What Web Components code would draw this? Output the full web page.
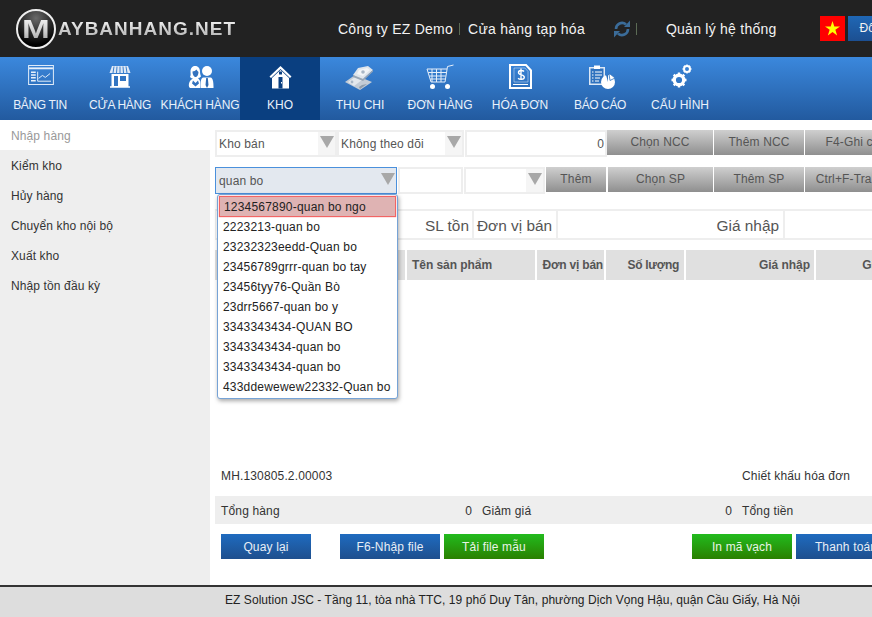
<!DOCTYPE html>
<html lang="vi"><head><meta charset="utf-8"><title>Kho</title>
<style>
html,body{margin:0;padding:0;width:872px;height:617px;overflow:hidden;background:#fff;font-family:"Liberation Sans",Arial,sans-serif;font-size:12px}
</style></head><body>
<app-page>
  <top-bar slot="top"></top-bar>
  <main-nav slot="nav">
    <nav-item label="BẢNG TIN" style="letter-spacing:-.35px"><svg style="margin:-3px 0 0 2px" width="26" height="20" viewBox="0 0 27 21" fill="none" stroke="#e8f1fb" stroke-width="1"><rect x=".5" y=".5" width="26" height="20"/><path d="M1 3.500h25" stroke-width="2"/><path d="M3 7.500h5M3 10.500h5M3 13.500h5M3 16.500h5" stroke-width="1.600"/><path d="M10 7v10M10 17h14M11 14l4-3 3 2 5-4"/></svg></nav-item>
    <nav-item label="CỬA HÀNG" style="letter-spacing:-.3px"><svg width="22" height="23" viewBox="0 0 22 23" fill="none"><path d="M3 1h16l2.500 7h-21z" fill="#dfe9f6"/><path d="M5 1.500 4 8M8 1.500 7.500 8M11 1.500V8M14 1.500l.5 6.500M17 1.500 18 8" stroke="#3a7fcb"/><path d="M2.500 9h17v13h-17z" fill="#fff"/><path d="M5 11h4v10H5zM11 11h6v5h-6z" fill="#3375c2"/><path d="M1 22h20" stroke="#fff" stroke-width="1.500"/></svg></nav-item>
    <nav-item label="KHÁCH HÀNG" style="letter-spacing:-.1px"><svg style="margin-left:1px" width="26" height="24" viewBox="0 0 26 24"><path d="M7 1c3.500 0 5 2.500 5 5.500 0 2 .5 3.500 1 5-1 1-2 1.500-3 1.500l1.500 2c1 1 1 4 .5 8H2c-1.500-1-1.500-4-.5-6 .5-1.500 2-2.500 3.500-3.500-1 0-2-.5-3-1.500C3 10 2.500 8.500 2.500 6.500 2.500 3.500 4 1 7 1z" fill="#fff"/><path d="M4.500 6.500c1.500 0 3-1 4-2 .5 1 1.500 2 2 2.500 0 3-1.500 5-3 5s-3-2.500-3-5.500zM5 15.500l2.500 2.500 2.500-2.500 1 3-3.500 3-3.500-3z" fill="#3473bf"/><circle cx="19" cy="6" r="5" fill="#fff"/><path d="M12.500 23c0-6 0-10 3-10.500h7c2.500.5 3 4.500 3 10.500z" fill="#fff"/><path d="M18.200 13h1.600l.7 7-1.500 3-1.500-3z" fill="#2d69b1"/></svg></nav-item>
    <nav-item label="KHO" active><svg width="23" height="24" viewBox="0 0 23 24"><path d="M11.500 1 22.500 11.500 21 13 11.500 4 2 13 .5 11.500z" fill="#fff"/><path d="M11.500 5 20 13v10.500H3V13z" fill="#fff"/><path d="M9.500 12h4v11.500h-4z" fill="#0a3f80"/><rect x="12" y="17" width="1" height="1.500" fill="#fff"/><path d="M10 6.500h3v3h-3z" fill="#0a3f80"/></svg></nav-item>
    <nav-item label="THU CHI"><svg style="margin:1px 2px 0 0" width="29" height="26" viewBox="0 0 29 26"><path d="M0 18 10 11 27 18 15 26z" fill="#c3ccd6"/><path d="M3 18 10 13l7 3-8 6z" fill="#e3e8ed"/><path d="M14 23l3-2 5-1-7 5z" fill="#8e9cab"/><path d="M13 4 23 2 28 6 18 15 8 11z" fill="#dfe5eb"/><path d="M14 6l8-2 3 2-7 6-6-2z" fill="#f2f5f7"/><path d="M8 11l10 4 10-9v1.500L18 17 8 13z" fill="#98a6b5"/><circle cx="18" cy="8" r="1.800" fill="#a9b7c6"/><circle cx="7" cy="18" r="1.400" fill="#a9b7c6"/></svg></nav-item>
    <nav-item label="ĐƠN HÀNG" style="letter-spacing:-.1px"><svg width="28" height="26" viewBox="0 0 28 26" fill="none" stroke="#e4eefa"><path d="M27.500 1 21.500 2.500 19 18H5L1 5h20"/><path d="M2.200 8.500h18M3.200 12h16.500M4.300 15h15M6 5v13M10.500 5v13M15 5v13"/><circle cx="6.500" cy="22.500" r="2.500" fill="#fff" stroke="none"/><circle cx="21.500" cy="22.500" r="2.500" fill="#fff" stroke="none"/></svg></nav-item>
    <nav-item label="HÓA ĐƠN"><svg style="margin-left:1px" width="23" height="25" viewBox="0 0 23 25" fill="none" stroke="#fff"><path d="M1 1h16l5 5.500V24H1z" stroke-width="2"/><path d="M5 4h11l3 3.500V18H5z" stroke-width=".7" opacity=".6"/><path d="M15 7.500c-1-1.300-5.500-1.800-5.500 1 0 3 5.800 1.800 5.800 4.800 0 2.700-5 2.300-6.200.9M12 4.500v11.500" stroke-width="1.400"/><path d="M4 20.500h15" stroke-width="1"/></svg></nav-item>
    <nav-item label="BÁO CÁO" style="letter-spacing:-.4px"><svg style="margin-left:3px" width="28" height="26" viewBox="0 0 28 26"><path d="M1 3h16v18H1z" fill="#dce8f6"/><path d="M2.500 4.500h13v15h-13z" fill="#2f72bf"/><path d="M6 1.500h6V5H6z" fill="#fff"/><path d="M4 8h1.500M7 8h7M4 11h1.500M7 11h7M4 14h1.500M7 14h5M4 17h1.500M7 17h4" stroke="#fff"/><circle cx="20" cy="18" r="7" fill="#fff"/><path d="M20 18V11l-2 0z" fill="#2f72bf"/><path d="M21 10h1l5 4-5 2.500z" fill="#fff" stroke="#2f72bf" stroke-width=".8"/></svg></nav-item>
    <nav-item label="CẤU HÌNH"><svg style="margin-left:2px" width="21" height="25" viewBox="0 0 21 25" fill="none" stroke="#fff"><circle cx="8" cy="16" r="4.800" stroke-width="3.400"/><path d="M8 8.500v2.500M8 21v2.500M.5 16H3M13 16h2.500M2.700 10.700l1.800 1.800M11.500 19.500l1.800 1.800M2.700 21.300l1.800-1.800M11.500 12.500l1.800-1.800" stroke-width="2.400"/><circle cx="16" cy="5" r="3" stroke-width="2"/><path d="M16 .5v1M16 8.500v1M11.500 5h1M19.500 5h1M12.900 1.900l.7.7M18.400 7.400l.7.7M12.900 8.100l.7-.7M18.400 2.600l.7-.7" stroke-width="1.500"/></svg></nav-item>
  </main-nav>
  <side-menu slot="side">
    <side-item active>Nhập hàng</side-item>
    <side-item>Kiểm kho</side-item>
    <side-item>Hủy hàng</side-item>
    <side-item>Chuyển kho nội bộ</side-item>
    <side-item>Xuất kho</side-item>
    <side-item>Nhập tồn đầu kỳ</side-item>
  </side-menu>
  <import-form slot="main">
    <form-row slot="r1" h="27">
      <x-select style="width:122px">Kho bán</x-select>
      <x-select style="width:127px;margin-right:1px">Không theo dõi</x-select>
      <x-field style="width:142px;text-align:right">0</x-field>
      <x-btn style="width:106px;margin-right:1px">Chọn NCC</x-btn>
      <x-btn style="width:90px;margin-right:1px">Thêm NCC</x-btn>
      <x-btn style="width:102px">F4-Ghi chú</x-btn>
    </form-row>
    <form-row slot="r2" h="26">
      <x-combo style="width:182px;margin-right:1px" value="quan bo">
        <combo-opt selected>1234567890-quan bo ngo</combo-opt>
        <combo-opt>2223213-quan bo</combo-opt>
        <combo-opt>23232323eedd-Quan bo</combo-opt>
        <combo-opt>23456789grrr-quan bo tay</combo-opt>
        <combo-opt>23456tyy76-Quần Bò</combo-opt>
        <combo-opt>23drr5667-quan bo y</combo-opt>
        <combo-opt>3343343434-QUAN BO</combo-opt>
        <combo-opt>3343343434-quan bo</combo-opt>
        <combo-opt>3343343434-quan bo</combo-opt>
        <combo-opt>433ddewewew22332-Quan bo</combo-opt>
      </x-combo>
      <x-field style="width:65px;margin-right:1px"></x-field>
      <x-select style="width:81px;margin-right:1px"></x-select>
      <x-btn style="width:60px;margin-right:2px">Thêm</x-btn>
      <x-btn style="width:105px;margin-right:1px">Chọn SP</x-btn>
      <x-btn style="width:90px;margin-right:1px">Thêm SP</x-btn>
      <x-btn style="width:102px">Ctrl+F-Tra cứu</x-btn>
    </form-row>
    <entry-row slot="r3">
      <entry-cell style="width:258px">SL tồn</entry-cell>
      <entry-cell style="width:84px" left>Đơn vị bán</entry-cell>
      <entry-cell style="width:227px;padding-right:4px">Giá nhập</entry-cell>
      <entry-cell style="width:120px"></entry-cell>
    </entry-row>
    <head-row slot="r4">
      <head-cell style="width:192px"></head-cell>
      <head-cell style="width:130px" left>Tên sản phẩm</head-cell>
      <head-cell style="width:69px;padding-right:1px;letter-spacing:-.2px">Đơn vị bán</head-cell>
      <head-cell style="width:80px;padding-right:5px;letter-spacing:-.3px">Số lượng</head-cell>
      <head-cell style="width:130px;padding-right:4px">Giá nhập</head-cell>
      <head-cell style="width:95px">Giá bán</head-cell>
    </head-row>
    <order-line slot="r5"><span slot="a">MH.130805.2.00003</span><span slot="b">Chiết khấu hóa đơn</span></order-line>
    <total-band slot="r6">
      <total-item label="Tổng hàng" value="0" style="width:261px"></total-item>
      <total-item label="Giảm giá" value="0" style="width:260px"></total-item>
      <total-item label="Tổng tiền" style="width:130px"></total-item>
    </total-band>
    <action-row slot="r7">
      <x-btn kind="blue" style="width:90px;margin-right:29px">Quay lại</x-btn>
      <x-btn kind="blue" style="width:100px;margin-right:4px">F6-Nhập file</x-btn>
      <x-btn kind="green" style="width:100px;margin-right:148px">Tải file mẫu</x-btn>
      <x-btn kind="green" style="width:100px;margin-right:4px">In mã vạch</x-btn>
      <x-btn kind="blue" style="width:100px">Thanh toán</x-btn>
    </action-row>
  </import-form>
  <page-foot slot="foot">EZ Solution JSC - Tầng 11, tòa nhà TTC, 19 phố Duy Tân, phường Dịch Vọng Hậu, quận Cầu Giấy, Hà Nội</page-foot>
</app-page>
<script>
function def(name, html){
  customElements.define(name, class extends HTMLElement{
    constructor(){super();this.attachShadow({mode:'open'}).innerHTML=typeof html==='function'?html(this):html;}
    connectedCallback(){
      this.shadowRoot.querySelectorAll('[data-attr]').forEach(n=>{n.textContent=this.getAttribute(n.dataset.attr)||'';});
      const v=this.shadowRoot.querySelector('[data-value]');
      if(v)v.textContent=this.getAttribute('value')||'';
    }
  });
}
def('app-page',`<style>
:host{display:flex;flex-direction:column;width:872px;height:617px;overflow:hidden}
.mid{flex:1;display:flex;min-height:0}
</style><slot name="top"></slot><slot name="nav"></slot><div class="mid"><slot name="side"></slot><slot name="main"></slot></div><slot name="foot"></slot>`);
def('top-bar',`<style>
:host{display:flex;align-items:center;height:57px;background:#222;color:#f2f2f2;font-size:14px;letter-spacing:.25px;flex:none;white-space:nowrap}
.logo{display:flex;align-items:center;margin-left:16px;width:219px;flex:none;letter-spacing:0}
.ring{width:36px;height:36px;border:2px solid #eee;border-radius:50%;background:radial-gradient(circle at 50% 20%,#6a6a6a 0,#2a2a2a 45%,#000 78%);display:flex;align-items:center;justify-content:center;flex:none}
.m{font:bold 26px/30px "Liberation Sans",sans-serif;background:linear-gradient(#fff,#ccc 60%,#999);-webkit-background-clip:text;background-clip:text;color:transparent;transform:scaleX(1.28)}
.word{font:bold 19px/24px "Liberation Sans",sans-serif;letter-spacing:1px;margin-left:2px;background:linear-gradient(#fff,#ccc 55%,#aaa);-webkit-background-clip:text;background-clip:text;color:transparent}
.co{margin-left:103px}
.sep{width:1px;height:12px;background:#5c6b55;flex:none}
.flag{width:25px;height:25px;background:#f00;display:flex;align-items:center;justify-content:center;margin-left:43px;flex:none}
.sw{width:40px;height:25px;margin-left:3px;background:linear-gradient(#1f67b5,#1c4f91);padding-left:12px;line-height:25px;font-size:12px;letter-spacing:0;flex:none;overflow:hidden;box-sizing:border-box}
</style>
<div class="logo"><div class="ring"><span class="m">M</span></div><span class="word">AYBANHANG.NET</span></div>
<span class="co">Công ty EZ Demo</span><span class="sep" style="margin:0 8px 0 6px"></span><span>Cửa hàng tạp hóa</span>
<svg style="margin-left:28px;flex:none" width="18" height="20" viewBox="0 0 18 20" fill="none" stroke="#3b6c99" stroke-width="2.600"><path d="M3 10a6 6 0 0 1 10-4.500"/><path d="M15 10a6 6 0 0 1-10 4.500"/><path d="M11 8h6V1.500z" fill="#3b6c99" stroke="none"/><path d="M7 12H1v6.500z" fill="#3b6c99" stroke="none"/></svg>
<span class="sep" style="margin-left:5px"></span>
<span style="margin-left:29px">Quản lý hệ thống</span>
<div class="flag"><svg width="15" height="15" viewBox="0 0 20 20"><path d="M10 0l2.400 7.300H20l-6.200 4.500 2.400 7.400-6.200-4.600-6.200 4.600 2.400-7.400L0 7.300h7.600z" fill="#ff0"/></svg></div>
<div class="sw">Đổi mật khẩu</div>`);
def('main-nav',`<style>:host{display:flex;height:63px;flex:none;background:linear-gradient(#3b88dd,#225a9f)}</style><slot></slot>`);
def('nav-item',`<style>
:host{display:flex;flex-direction:column;align-items:center;width:80px;height:63px;flex:none;color:#e9f1fa;font-size:12px;white-space:nowrap}
:host([active]){background:#0a3f80}
.i{height:33px;margin-top:3px;display:flex;align-items:center;justify-content:center}
.l{line-height:14px;margin-top:5px}
</style><div class="i"><slot></slot></div><div class="l" data-attr="label"></div>`);
def('side-menu',`<style>:host{display:block;width:210px;flex:none;background:#eee}</style><slot></slot>`);
def('side-item',`<style>
:host{display:block;height:30px;line-height:32px;padding-left:11px;color:#333;font-size:12px;letter-spacing:.12px}
:host([active]){background:#fff;color:#999}
</style><slot></slot>`);
def('import-form',`<style>
:host{display:flex;flex-direction:column;flex:1;min-width:0;padding:10px 0 0 5px;overflow:hidden;letter-spacing:.15px}
.gap10{height:10px;flex:none}.gap16{height:16px;flex:none}
</style><slot name="r1"></slot><div class="gap10"></div><slot name="r2"></slot><div class="gap16"></div><slot name="r3"></slot><div class="gap10"></div><slot name="r4"></slot><slot name="r5"></slot><slot name="r6"></slot><slot name="r7"></slot>`);
def('form-row',`<style>:host{display:flex;align-items:flex-start;flex:none;width:700px}:host([h="27"]){height:27px}:host([h="26"]){height:26px}</style><slot></slot>`);
def('x-select',`<style>
:host{display:flex;box-sizing:border-box;height:27px;border:2px solid #eee;color:#555;font-size:12px;line-height:25px;flex:none}
.t{flex:1;padding-left:2px;white-space:nowrap;overflow:hidden}
.a{width:17px;background:#f5f5f5;display:flex;justify-content:center;padding-top:4px;box-sizing:border-box;flex:none}
.a i{width:0;height:0;border:7px solid transparent;border-top:12px solid #a8a8a8;border-bottom:0}
</style><div class="t"><slot></slot></div><div class="a"><i></i></div>`);
def('x-field',`<style>:host{display:block;box-sizing:border-box;height:27px;border:2px solid #eee;color:#555;font-size:12px;line-height:25px;padding:0 1px;flex:none}</style><slot></slot>`);
def('x-btn',`<style>
:host{display:block;box-sizing:border-box;height:25px;line-height:25px;text-align:center;white-space:nowrap;overflow:hidden;font-size:12px;color:#555;background:linear-gradient(#cfcfcf,#8f8f8f);flex:none}
:host([kind]){line-height:26px}
:host([kind=blue]){color:#e8eef6;background:linear-gradient(#1f6bbf,#1e4f8e)}
:host([kind=green]){color:#e8f4e6;background:linear-gradient(#22bb1e,#2a8000)}
</style><slot></slot>`);
def('x-combo',(h)=>`<style>
:host{display:block;position:relative;flex:none;height:27px;z-index:2}
.in{box-sizing:border-box;height:27px;border:1px solid #4a90dc;background:#e3e8ef;color:#555;font-size:12px;line-height:26px;padding-left:3px;display:flex;justify-content:space-between}
.a{width:0;height:0;border:7px solid transparent;border-top:12px solid #a8a8a8;border-bottom:0;margin:5px 1px 0 0}
.list{position:absolute;left:2px;top:27px;width:181px;box-sizing:border-box;height:205px;padding:1px 1px;border:1px solid #76a3d6;border-radius:3px;background:#fff;box-shadow:1px 2px 4px rgba(0,0,0,.35)}
</style><div class="in"><span data-value></span><i class="a"></i></div><div class="list"><slot></slot></div>`);
def('combo-opt',`<style>
:host{display:block;box-sizing:border-box;height:20px;line-height:21px;padding-left:4px;color:#222;font-size:12px;letter-spacing:.2px;white-space:nowrap}
:host([selected]){height:21px;background:#dfb3b3;border:1px solid #f26464;box-shadow:0 0 1px #f26464;line-height:20px;padding-left:4px}
</style><slot></slot>`);
def('entry-row',`<style>:host{display:flex;height:31px;flex:none;width:700px}</style><slot></slot>`);
def('entry-cell',`<style>
:host{display:block;box-sizing:border-box;height:31px;border:2px solid #eee;border-right-width:1px;border-left-width:1px;color:#555;font-size:15.4px;letter-spacing:0;line-height:29px;text-align:right;padding:0 3px;white-space:nowrap;overflow:hidden;flex:none}
:host([left]){text-align:left}
</style><slot></slot>`);
def('head-row',`<style>:host{display:flex;height:30px;flex:none;width:700px}</style><slot></slot>`);
def('head-cell',`<style>
:host{display:block;box-sizing:border-box;height:30px;background:#e0e0e0;border-right:2px solid #fff;color:#555;font:bold 12px/30px "Liberation Sans",sans-serif;letter-spacing:-.05px;text-align:right;padding:0 3px 0 5px;white-space:nowrap;flex:none}
:host([left]){text-align:left}
</style><slot></slot>`);
def('order-line',`<style>
:host{display:flex;height:20px;line-height:20px;margin-top:186px;padding-left:6px;color:#333;font-size:12px;flex:none;width:700px}
.a{width:521px;flex:none}
</style><div class="a"><slot name="a"></slot></div><slot name="b"></slot>`);
def('total-band',`<style>:host{display:flex;height:28px;margin-top:10px;background:#eee;flex:none;width:700px;padding-left:6px;box-sizing:border-box}</style><slot></slot>`);
def('total-item',`<style>
:host{display:flex;justify-content:space-between;line-height:30px;color:#333;font-size:12px;box-sizing:border-box;padding-right:10px;white-space:nowrap;flex:none}
.v{text-align:right}
</style><span data-attr="label"></span><span class="v" data-attr="value"></span>`);
def('action-row',`<style>:host{display:flex;margin-top:10px;padding-left:6px;height:25px;flex:none;width:700px}</style><slot></slot>`);
def('page-foot',`<style>
:host{display:block;box-sizing:border-box;height:32px;flex:none;background:#ddd;border-top:2px solid #333;color:#222;font-size:12px;letter-spacing:.06px;line-height:27px;padding-left:225px;white-space:nowrap}
</style><slot></slot>`);
</script>
</body></html>
